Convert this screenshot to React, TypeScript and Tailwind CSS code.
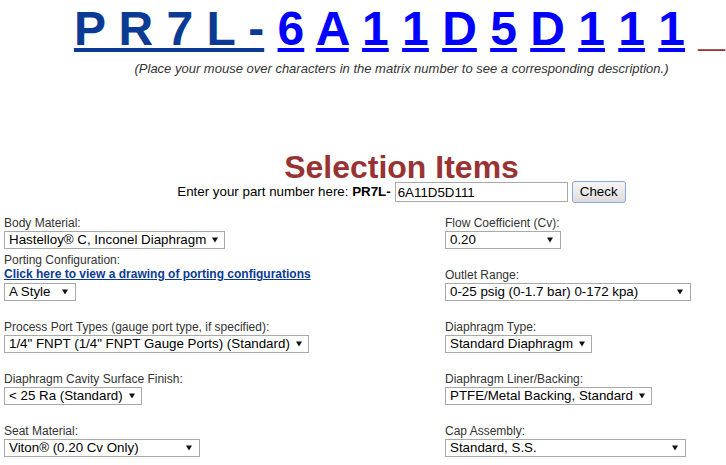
const font = { fontFamily: '"Liberation Sans", Arial, sans-serif' };

type Field = { label: string; value: string; w: string; link?: boolean };

const rows: { mt: string; left: Field; right: Field }[] = [
  {
    mt: "mt-[13px]",
    left: { label: "Body Material:", value: "Hastelloy® C, Inconel Diaphragm", w: "w-[221px]" },
    right: { label: "Flow Coefficient (Cv):", value: "0.20", w: "w-[116px]" },
  },
  {
    mt: "mt-[4px]",
    left: { label: "Porting Configuration:", value: "A Style", w: "w-[72px]", link: true },
    right: { label: "Outlet Range:", value: "0-25 psig (0-1.7 bar) 0-172 kpa)", w: "w-[246px]" },
  },
  {
    mt: "mt-[19px]",
    left: { label: "Process Port Types (gauge port type, if specified):", value: '1/4" FNPT (1/4" FNPT Gauge Ports) (Standard)', w: "w-[305px]" },
    right: { label: "Diaphragm Type:", value: "Standard Diaphragm", w: "w-[147px]" },
  },
  {
    mt: "mt-[19px]",
    left: { label: "Diaphragm Cavity Surface Finish:", value: "< 25 Ra (Standard)", w: "w-[138px]" },
    right: { label: "Diaphragm Liner/Backing:", value: "PTFE/Metal Backing, Standard", w: "w-[207px]" },
  },
  {
    mt: "mt-[19px]",
    left: { label: "Seat Material:", value: "Viton® (0.20 Cv Only)", w: "w-[196px]" },
    right: { label: "Cap Assembly:", value: "Standard, S.S.", w: "w-[241px]" },
  },
];

const code = ["6", "A", "1", "1", "D", "5", "D", "1", "1", "1"];

function Select({ value, w, mt }: { value: string; w: string; mt: string }) {
  return (
    <div className={`${w} ${mt} flex h-[18px] items-center justify-between border border-[#a9a9a9] bg-white pl-[4px] pr-[7px] text-[13.33px] leading-[16px] text-black whitespace-nowrap`}>
      <span>{value}</span>
      <svg width="6" height="6" viewBox="0 0 6 6" className="ml-[6px] shrink-0">
        <polygon points="0,0.5 6,0.5 3,5.5" fill="#111" />
      </svg>
    </div>
  );
}

function Cell({ f }: { f: Field }) {
  return (
    <div className="flex flex-col items-start">
      <div className="text-[12px] leading-[14px] text-[#333]">{f.label}</div>
      {f.link && (
        <a className="text-[12px] font-bold leading-[14px] text-[#0b3a94] underline">
          Click here to view a drawing of porting configurations
        </a>
      )}
      <Select value={f.value} w={f.w} mt={f.link ? "mt-[2px]" : "mt-[1px]"} />
    </div>
  );
}

export default function App() {
  return (
    <div className="w-[726px] h-[465px] overflow-hidden bg-white" style={font}>
      <div className="w-[803px]">
        <div className="h-[55px] pt-[1px] pr-[4px] text-center text-[48px] font-bold leading-[55px] whitespace-pre">
          <a className="text-[#0b3a94] underline">P R 7 L -</a>
          {code.map((c, i) => (
            <span key={i}>
              {" "}
              <a className="text-[#0000ff] underline">{c}</a>
            </span>
          ))}
          <span className="text-[#993333]">{" _"}</span>
        </div>
        <p className="mt-[6px] text-center text-[13px] italic leading-[15px] text-[#333]">
          (Place your mouse over characters in the matrix number to see a corresponding description.)
        </p>
        <h1 className="mt-[78px] text-center text-[32px] font-bold leading-[27px] text-[#993333]">Selection Items</h1>
        <div className="flex h-[22px] items-center justify-center">
          <span className="text-[13.33px] leading-[16px] text-black">
            Enter your part number here: <b>PR7L-</b>
          </span>
          <input
            className="ml-[4px] h-[20px] w-[173px] border border-[#a9a9a9] bg-white px-[2px] text-[13.33px] text-black outline-none"
            style={font}
            defaultValue="6A11D5D111"
          />
          <button
            className="ml-[4px] h-[22px] w-[54px] rounded-[3px] border border-[#8ea6d2] bg-gradient-to-b from-[#f6f6f6] to-[#dcdcdc] text-[13.33px] text-black"
            style={font}
          >
            Check
          </button>
        </div>
        <div className="pl-[4px]">
          {rows.map((r, i) => (
            <div key={i} className={`${r.mt} flex items-end`}>
              <div className="w-[441px]">
                <Cell f={r.left} />
              </div>
              <Cell f={r.right} />
            </div>
          ))}
        </div>
      </div>
    </div>
  );
}
